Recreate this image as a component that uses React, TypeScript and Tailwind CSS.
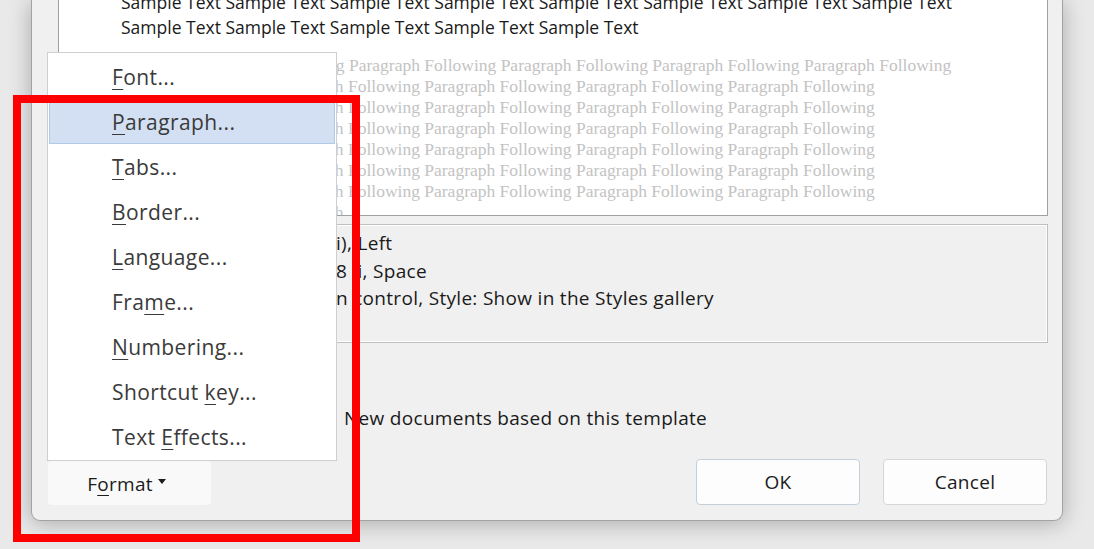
import * as React from "react"

type MenuItem = {
  pre: string
  accel: string
  post: string
  active?: boolean
}

const menuItems: MenuItem[] = [
  { pre: "", accel: "F", post: "ont..." },
  { pre: "", accel: "P", post: "aragraph...", active: true },
  { pre: "", accel: "T", post: "abs..." },
  { pre: "", accel: "B", post: "order..." },
  { pre: "", accel: "L", post: "anguage..." },
  { pre: "Fra", accel: "m", post: "e..." },
  { pre: "", accel: "N", post: "umbering..." },
  { pre: "Shortcut ", accel: "k", post: "ey..." },
  { pre: "Text ", accel: "E", post: "ffects..." },
]

const sample = "Sample Text"
const sampleLines = [
  Array(8).fill(sample).join(" "),
  Array(5).fill(sample).join(" "),
]

const pair = "Paragraph Following"
const followingLines = [
  "Following " + Array(5).fill(pair).join(" "),
  ...Array(6).fill(Array(5).fill(pair).join(" ")),
  "Paragraph Following Paragraph",
]

// prefix sits right-aligned up to the split column, the rest runs on after it
const descLines: [string, string][] = [
  ["Font: (Default) +Body (Calibr", "i), Left"],
  ["Line spacing:  Multiple 1.0", "8 li, Space"],
  ["After:  8 pt, Widow/Orpha", "n control, Style: Show in the Styles gallery"],
]

const Accel: React.FC<{ children: React.ReactNode }> = ({ children }) => (
  <span className="underline decoration-1 underline-offset-[4px]">{children}</span>
)

const Radio: React.FC<{ checked?: boolean }> = ({ checked }) => (
  <span className="flex h-[16px] w-[16px] shrink-0 items-center justify-center rounded-full border border-[#5a5a5a] bg-white">
    {checked && <span className="h-[8px] w-[8px] rounded-full bg-[#1a1a1a]" />}
  </span>
)

const DialogButton: React.FC<{ children: React.ReactNode; primary?: boolean }> = ({
  children,
  primary,
}) => (
  <button
    className={
      "flex h-[46px] w-[164px] items-center justify-center rounded-[4px] border bg-[#fdfdfd] text-[19px] tracking-[0.3px] text-[#1b1b1b] " +
      (primary ? "border-[#c3cfdb]" : "border-[#d6d6d6]")
    }
  >
    {children}
  </button>
)

const FormatMenu: React.FC = () => (
  <div className="absolute left-[47px] top-[52px] w-[290px] border border-[#cfcfcf] bg-white pt-[2px]">
    {menuItems.map((item) => (
      <div key={item.post} className="flex h-[45px] items-stretch">
        <div
          className={
            "mx-px flex flex-1 items-center border pl-[62px] text-[21px] tracking-[0.4px] text-[#3a3a3a] " +
            (item.active
              ? "my-px border-[#b1c8e8] bg-[#d3e0f3]"
              : "border-transparent")
          }
        >
          <span className="whitespace-pre">
            {item.pre}
            <Accel>{item.accel}</Accel>
            {item.post}
          </span>
        </div>
      </div>
    ))}
  </div>
)

export default function App() {
  return (
    <div className="relative h-[549px] w-[1094px] overflow-hidden bg-[#e9e9e9] pl-[31px] font-['Open_Sans','Noto_Sans',sans-serif]">
      <div className="flex h-[521px] w-[1032px] flex-col rounded-b-[9px] border-x border-b border-[#a3a3a3] bg-[#f0f0f0] shadow-[0_2px_22px_rgba(0,0,0,0.28)]">
        {/* preview */}
        <div className="ml-[26px] h-[216px] w-[990px] overflow-hidden border-x border-b border-[#a0a0a0] bg-white pl-[62px]">
          <div className="-mt-[10px] text-[17.5px] leading-[25px] text-[#1a1a1a]">
            {sampleLines.map((line, i) => (
              <div key={i} className="whitespace-nowrap">
                {line}
              </div>
            ))}
          </div>
          <div className="mt-[15px] font-['Liberation_Serif','Times_New_Roman',serif] text-[17.5px] leading-[21px] text-[#c3c3c3]">
            {followingLines.map((line, i) => (
              <div key={i} className="whitespace-nowrap">
                {line}
              </div>
            ))}
          </div>
        </div>

        {/* style description */}
        <div className="ml-[26px] mt-[8px] h-[119px] w-[990px] border border-[#bfbfbf] bg-[#f0f0f0] pt-[5px] shadow-[inset_1px_1px_0_#ffffff,inset_-1px_-1px_0_#ffffff] text-[19px] leading-[27.5px] tracking-[0.3px] text-[#1a1a1a]">
          {descLines.map(([pre, rest], i) => (
            <div key={i} className="grid grid-cols-[277px_1fr]">
              <span className="flex justify-end overflow-hidden whitespace-pre">{pre}</span>
              <span className="whitespace-pre">{rest}</span>
            </div>
          ))}
        </div>

        {/* options */}
        <div className="mt-[15px] flex h-[24px] items-center gap-[10px] pl-[40px] text-[19px] tracking-[0.3px] text-[#1a1a1a]">
          <span className="flex h-[16px] w-[16px] items-center justify-center rounded-[3px] bg-[#005fb8] text-[11px] leading-none text-white">
            ✓
          </span>
          <span>Add to the Styles gallery</span>
        </div>
        <div className="mt-[24px] flex h-[24px] items-center pl-[40px] text-[19px] tracking-[0.3px] text-[#1a1a1a]">
          <div className="flex w-[246px] items-center gap-[10px]">
            <Radio />
            <span className="whitespace-nowrap text-[15px]">Only in this document</span>
          </div>
          <div className="flex items-center gap-[10px]">
            <Radio checked />
            <span>New documents based on this template</span>
          </div>
        </div>

        {/* footer buttons */}
        <div className="mt-[29px] flex h-[46px] items-center pl-[16px] pr-[15px]">
          <button className="mt-[2px] flex h-[44px] w-[163px] items-center justify-center gap-[5px] rounded-[4px] bg-[#f9f9f9] pr-[6px] pt-[2px] text-[19px] tracking-[0.3px] text-[#1b1b1b]">
            <span>
              F<Accel>o</Accel>rmat
            </span>
            <svg width="8" height="5" viewBox="0 0 8 5" className="-mt-[5px]">
              <path d="M0 0h8L4 5z" fill="#1b1b1b" />
            </svg>
          </button>
          <div className="ml-auto flex gap-[23px]">
            <DialogButton primary>OK</DialogButton>
            <DialogButton>Cancel</DialogButton>
          </div>
        </div>
      </div>

      <FormatMenu />

      {/* callout frame */}
      <div className="pointer-events-none absolute left-[13px] top-[95px] h-[447px] w-[347px] border-[8px] border-[#ff0000]" />
    </div>
  )
}
